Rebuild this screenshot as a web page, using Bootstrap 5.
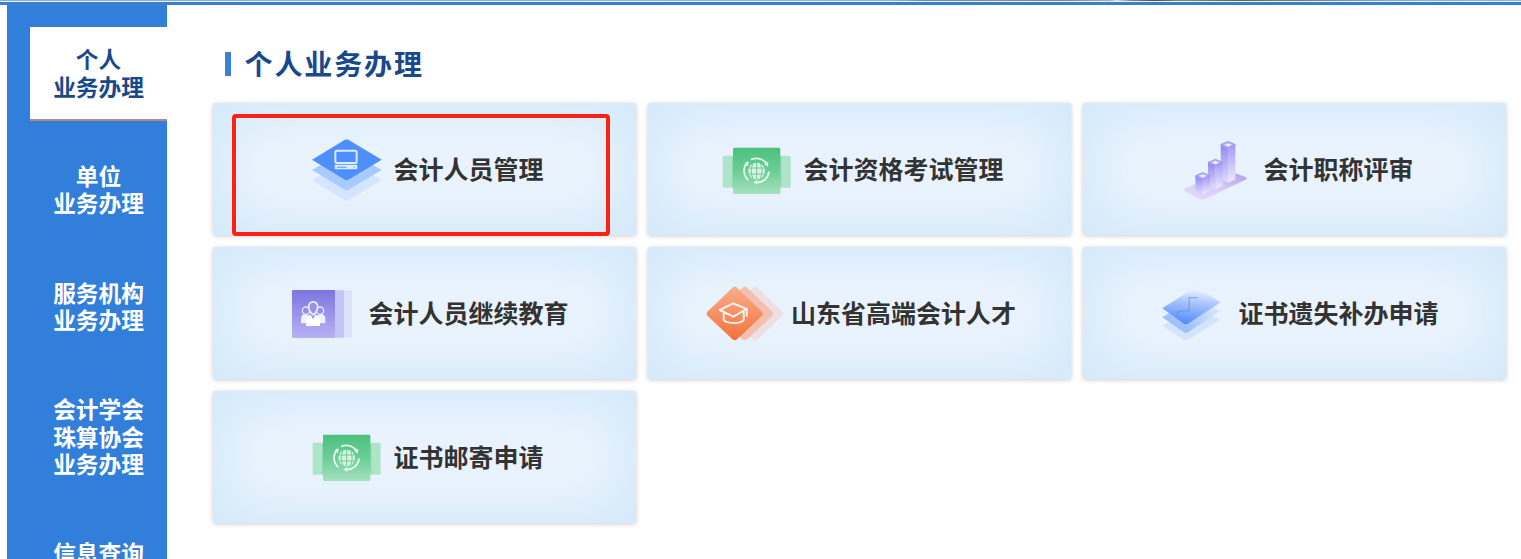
<!DOCTYPE html>
<html lang="zh-CN">
<head>
<meta charset="utf-8">
<meta name="viewport" content="width=device-width, initial-scale=1">
<title>个人业务办理</title>
<link href="https://cdn.jsdelivr.net/npm/bootstrap@5.3.0/dist/css/bootstrap.min.css" rel="stylesheet">
<style>
  body { height: 559px; overflow: hidden; background: #fff; font-family: "Noto Sans CJK SC", sans-serif; font-weight: 700; }
  .banner-edge { height: 1px; background: linear-gradient(90deg, #84b0df 0, #8fb8e2 890px, #6c8ea9 925px, #81938a 1000px, #7c8c68 1060px, #a9b0a3 1110px, #e0e0e4 1117px, #83876f 1130px, #4b5733 1155px, #7f925a 1180px, #586b38 1240px, #71854d 1280px, #6c8067 1300px, #7893a4 1340px, #86aed5 1400px, #8db6df 100%); }
  .banner-line { height: 4px; background: #3b7ecf; border-top: 1px solid #e5f2fb; }
  .side { width: 160px; height: 554px; margin-left: 7px; padding: 22px 0 0 23px; gap: 23px; background: #327fdb; overflow: hidden; }
  .side-link { display: block; padding: 18.4px 0 18.6px; font-size: 22.7px; line-height: 27.35px; color: #fff; text-align: center; text-decoration: none; border-bottom: 2px solid transparent; }
  .side-link.active { background: #fff; color: #17498b; border-bottom-color: #b58a86; }
  .pane { width: 1293px; margin-left: 46px; }
  .pane-title { height: 98px; padding: 20px 0 0 12px; }
  .pane-title h1 { margin: 0 0 2px; font-size: 28px; line-height: 36px; letter-spacing: 1.9px; color: #17498b; font-weight: 700; }
  .title-bar { width: 6px; height: 24px; margin-right: 13.5px; background: #3b80d6; }
  .tiles { display: grid; grid-template-columns: repeat(3, 1fr); grid-auto-rows: 131.5px; gap: 12.5px 12px; }
  .tile { position: relative; color: #333; font-size: 25px; line-height: 36px; text-decoration: none; white-space: nowrap; border-radius: 2px; background: #ebf4fd; box-shadow: inset 0 0 58px 12px #d1e8f9, 0 1px 5px rgba(0,0,0,.2); }
  .tile svg { width: 89px; height: 80px; flex: none; overflow: visible; }
  .tile-label { margin: 0 0 2px -1px; }
  .highlight { position: absolute; left: 19px; top: 11px; width: 378px; height: 122px; border: 4px solid #fb2114; border-radius: 4px; }
</style>
</head>
<body>
<div class="banner-edge"></div>
<div class="banner-line"></div>

<svg width="0" height="0" class="position-absolute" aria-hidden="true">
  <defs>
    <linearGradient id="gGreen" x1="0" y1="0" x2="0" y2="1"><stop offset="0" stop-color="#4bc27e"/><stop offset=".5" stop-color="#6bcd96"/><stop offset="1" stop-color="#a5e1bf"/></linearGradient>
    <linearGradient id="gViolet" x1="0" y1="0" x2="0" y2="1"><stop offset="0" stop-color="#7d75df"/><stop offset="1" stop-color="#b8b1f4"/></linearGradient>
    <linearGradient id="gOrange" x1="0" y1="0" x2="0" y2="1"><stop offset="0" stop-color="#f8ae8b"/><stop offset="1" stop-color="#f5713c"/></linearGradient>
    <linearGradient id="gFace" x1="0" y1="0" x2="0" y2="1"><stop offset="0" stop-color="#9289ef"/><stop offset="1" stop-color="#e0dbff"/></linearGradient>
    <linearGradient id="gSide" x1="0" y1="0" x2="0" y2="1"><stop offset="0" stop-color="#a399f7"/><stop offset="1" stop-color="#eeeaff"/></linearGradient>
    <linearGradient id="gBase" x1="0" y1="1" x2="1" y2="0"><stop offset="0" stop-color="#e6dcfa"/><stop offset=".5" stop-color="#d6cbf7"/><stop offset="1" stop-color="#a99bf0"/></linearGradient>
    <linearGradient id="gSheet" x1=".6" y1="0" x2=".4" y2="1"><stop offset="0" stop-color="#f4f9ff"/><stop offset=".4" stop-color="#a9c6fd"/><stop offset="1" stop-color="#5089fc"/></linearGradient>
    <linearGradient id="gSheet2" x1="1" y1="0" x2=".3" y2=".8"><stop offset="0" stop-color="#edf4fe"/><stop offset="1" stop-color="#9dbffc"/></linearGradient>

    <g id="icGlobe">
      <g fill="#aee4c7"><rect x="38" y="77" width="36" height="96" rx="4"/><rect x="205" y="77" width="37" height="96" rx="4"/></g>
      <path d="M68 80v90M212 80v90" stroke="#8fd9b1" stroke-width="4"/>
      <rect x="69" y="53" width="142" height="139" rx="4" fill="url(#gGreen)"/>
      <g fill="none" stroke="#eafbf1" stroke-width="5" stroke-linecap="round">
        <path d="M125 88A37 37 0 0 1 171 103M177 126A38 38 0 0 1 138 158M113 149A38 38 0 0 1 112 97"/>
      </g>
      <path d="M162 101l13-5-1 14zM142 150v14l-12-7zM104 99l13-3-4 13z" fill="#eafbf1"/>
      <circle cx="140" cy="123" r="25" fill="#d7f3e2"/>
      <path d="M140 98v50M116 114h48M116 132h48M129 100q-11 23 0 46M151 100q11 23 0 46" fill="none" stroke="#70cb97" stroke-width="3"/>
    </g>
  </defs>
</svg>

<div class="d-flex">
  <nav class="side d-flex flex-column flex-shrink-0">
    <a class="side-link active" href="#">个人<br>业务办理</a>
    <a class="side-link" href="#">单位<br>业务办理</a>
    <a class="side-link" href="#">服务机构<br>业务办理</a>
    <a class="side-link" href="#">会计学会<br>珠算协会<br>业务办理</a>
    <a class="side-link" href="#">信息查询</a>
  </nav>

  <main class="pane flex-shrink-0">
    <div class="pane-title d-flex align-items-center">
      <span class="title-bar"></span>
      <h1>个人业务办理</h1>
    </div>
    <div class="tiles">
      <a class="tile d-flex align-items-center justify-content-center" href="#">
        <svg viewBox="0 0 89 80"><g transform="translate(-15 -4) scale(.33333)">
          <path d="M66 166l104-61 105 61-100 60q-5 3-10 0z" fill="#d4e5ff"/>
          <path d="M66 135l104-61 105 61-100 59q-5 3-10 0z" fill="#a7caff"/>
          <path d="M66 104l99-60q5-3 10 0l100 60-100 60q-5 3-10 0z" fill="#4e8ffc"/>
          <rect x="136" y="77" width="64" height="37" rx="4" fill="none" stroke="#dcebff" stroke-width="6"/>
          <rect x="134" y="119" width="68" height="14" rx="3" fill="#dcebff"/>
          <path d="M141 127h29" stroke="#73a8ff" stroke-width="4"/><path d="M192 123v6" stroke="#a9caff" stroke-width="5"/>
        </g></svg>
        <span class="tile-label">会计人员管理</span>
        <span class="highlight"></span>
      </a>
      <a class="tile d-flex align-items-center justify-content-center" href="#">
        <svg viewBox="0 0 89 80"><use href="#icGlobe" transform="translate(-5 1) scale(.33333)"/></svg>
        <span class="tile-label">会计资格考试管理</span>
      </a>
      <a class="tile d-flex align-items-center justify-content-center" href="#">
        <svg viewBox="0 0 89 80"><g transform="translate(-5.6 1.2) scale(.33333)">
          <path d="M44 176L176 124q5-2 10 1l44 16q5 3 0 7L108 206q-8 4-16 1L44 182q-4-3 0-6z" fill="url(#gBase)"/>
          <path d="M154 43l22 12v103l-22-10z" fill="url(#gFace)"/><path d="M176 55l22-12v104l-22 11z" fill="url(#gSide)"/>
          <path d="M154 43l22-9 22 9-22 11z" fill="#b1a8fb" stroke="#8f85ee" stroke-width="2"/><path d="M164 44l12-5 12 5-12 6z" fill="#eeeaff"/>
          <path d="M116 97l22 10v70l-22-10z" fill="url(#gFace)"/><path d="M138 107l22-10v70l-22 10z" fill="url(#gSide)"/>
          <path d="M116 97l22-10 22 10-22 10z" fill="#b1a8fb" stroke="#8f85ee" stroke-width="2"/><path d="M126 97l12-5 12 5-12 5z" fill="#eeeaff"/>
          <path d="M78 137l22 11v45l-22-10z" fill="url(#gFace)"/><path d="M100 148l22-11v45l-22 11z" fill="url(#gSide)"/>
          <path d="M78 137l22-10 22 10-22 11z" fill="#b1a8fb" stroke="#8f85ee" stroke-width="2"/><path d="M88 137l12-5 12 5-12 6z" fill="#eeeaff"/>
        </g></svg>
        <span class="tile-label">会计职称评审</span>
      </a>
      <a class="tile d-flex align-items-center justify-content-center" href="#">
        <svg viewBox="0 0 89 80"><g transform="translate(0 2) scale(.33333)">
          <rect x="150" y="46" width="66" height="142" rx="4" fill="#dce2fc"/>
          <rect x="140" y="46" width="52" height="142" rx="4" fill="#c3c5f7"/>
          <rect x="36" y="45" width="129" height="144" rx="4" fill="url(#gViolet)"/>
          <g fill="none" stroke="#e7e4ff" stroke-width="4"><circle cx="78" cy="107" r="11"/><circle cx="120" cy="107" r="11"/></g>
          <path d="M63 145v-14q0-12 12-15l14 8v21zM136 145v-14q0-12-12-15l-14 8v21z" fill="#f1f0ff"/>
          <path d="M78 153v-17q0-14 14-17l7 14 7-14q14 3 14 17v17z" fill="#fff"/>
          <path d="M86 94a13 13 0 0 1 27 0q0 17-13 25-14-8-14-25z" fill="#9b92e7" stroke="#f1efff" stroke-width="5"/>
        </g></svg>
        <span class="tile-label">会计人员继续教育</span>
      </a>
      <a class="tile d-flex align-items-center justify-content-center" href="#">
        <svg viewBox="0 0 89 80"><g transform="translate(-7.6 2) scale(.33333)">
          <path d="M172 38q7-6 14 0l75 72q5 6 0 12l-75 71q-7 6-14 0l-75-71q-5-6 0-12z" fill="#eddfe2"/>
          <path d="M141 38q7-6 14 0l76 72q5 6 0 12l-76 71q-7 6-14 0l-75-71q-5-6 0-12z" fill="#f3bfaf"/>
          <path d="M111 38q7-6 14 0l75 72q5 6 0 12l-75 71q-7 6-14 0l-75-71q-5-6 0-12z" fill="url(#gOrange)"/>
          <g fill="none" stroke="#fff3ec" stroke-width="6" stroke-linejoin="round" stroke-linecap="round">
            <path d="M73 105l40-20 41 17-40 23zM85 115v20q7 9 31 9 23 0 29-10v-22M154 103v19"/>
          </g>
        </g></svg>
        <span class="tile-label">山东省高端会计人才</span>
      </a>
      <a class="tile d-flex align-items-center justify-content-center" href="#">
        <svg viewBox="0 0 89 80"><g transform="translate(-.8 2) scale(.33333)">
          <path d="M39 153l100-60 73 41-96 60q-6 4-12 0z" fill="#d3e4fe"/>
          <path d="M39 127l100-60 73 41-96 64q-6 4-12 0z" fill="url(#gSheet2)"/>
          <path d="M39 100l96-61q5-3 10 0l67 41q2 2-2 5l-94 61q-6 4-12 0z" fill="url(#gSheet)"/>
          <path d="M80 125l7-15 33-3V68h26" fill="none" stroke="#5c8df0" stroke-opacity=".6" stroke-width="4"/>
        </g></svg>
        <span class="tile-label">证书遗失补办申请</span>
      </a>
      <a class="tile d-flex align-items-center justify-content-center" href="#">
        <svg viewBox="0 0 89 80"><use href="#icGlobe" transform="translate(-5 0) scale(.33333)"/></svg>
        <span class="tile-label">证书邮寄申请</span>
      </a>
    </div>
  </main>
</div>
<script src="https://cdn.jsdelivr.net/npm/bootstrap@5.3.0/dist/js/bootstrap.bundle.min.js"></script>
</body>
</html>
